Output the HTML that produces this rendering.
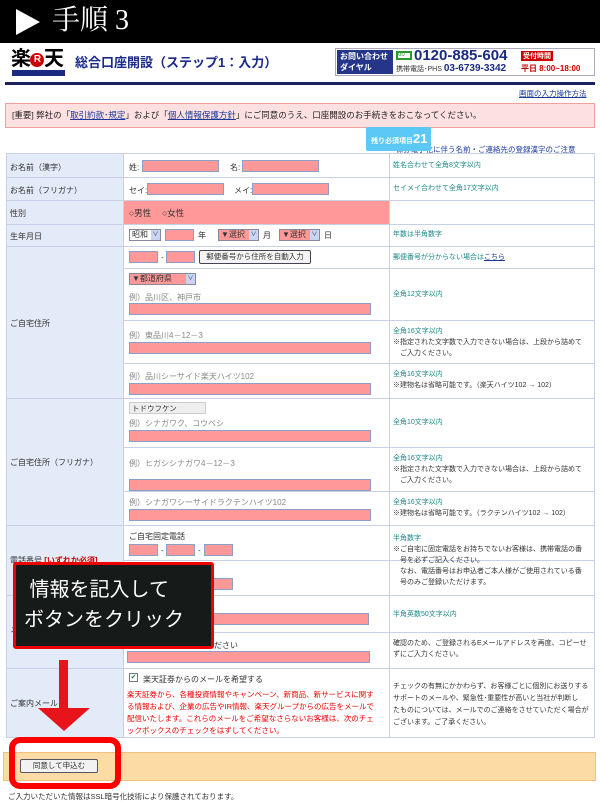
<!DOCTYPE html>
<html><head><meta charset="utf-8"><style>
*{margin:0;padding:0;box-sizing:border-box}
body{width:600px;height:800px;position:relative;background:#fff;font-family:"Liberation Sans","Noto Sans CJK JP",sans-serif;font-size:8px;color:#333;overflow:hidden}
.a{position:absolute}
.inp{position:absolute;background:#f99;border:1px solid #8aa0c8}
.lab{position:absolute;left:10px;font-size:8px;color:#333}
.ex{position:absolute;color:#888;font-size:8px}
.note{position:absolute;left:393px;font-size:7px;line-height:11px;color:#333;white-space:nowrap}
.note.tl,.tl{color:#1a8a8a}
.hl{position:absolute;left:6px;width:589px;height:1px;background:#c8d0e6}
.sl{position:absolute;left:123px;width:472px;height:1px;background:#c8d0e6}
.sel{position:absolute;height:12px;border:1px solid #889;background:#fff;font-size:8px;line-height:10px;padding-left:2px}
.sel i{position:absolute;right:0;top:0;width:9px;height:10px;background:#c8d4f0;font-style:normal;font-size:6px;text-align:center;color:#335}
</style></head><body>
<div class="a" style="left:0;top:0;width:600px;height:43px;background:#000"></div>
<div class="a" style="left:16px;top:9px;width:0;height:0;border-left:24px solid #fff;border-top:13px solid transparent;border-bottom:13px solid transparent"></div>
<div class="a" style="left:52px;top:4px;color:#fff;font-family:'Liberation Serif','Noto Serif CJK SC',serif;font-size:28px;line-height:34px">手順 3</div>

<div class="a" style="left:11px;top:48px;font-size:20px;font-weight:bold;line-height:22px;color:#000;letter-spacing:-1px">楽<span style="display:inline-block;width:14px;height:14px;border-radius:50%;background:#c00;color:#fff;font-size:10px;line-height:14px;text-align:center;vertical-align:3px">R</span>天</div>
<div class="a" style="left:12px;top:70px;width:53px;height:6px;background:#1a2a80"></div>
<div class="a" style="left:75px;top:52px;font-size:13px;color:#1a2a8a;font-weight:bold;white-space:nowrap">総合口座開設（ステップ1：入力）</div>
<div class="a" style="left:335px;top:48px;width:260px;height:28px;border:1px solid #aab;background:#fff"></div>
<div class="a" style="left:337px;top:50px;width:56px;height:24px;background:#24358a;color:#fff;font-size:8px;font-weight:bold;line-height:11px;padding:1px 3px">お問い合わせ<br>ダイヤル</div>
<div class="a" style="left:396px;top:51px;width:16px;height:9px;border:2px solid #2a9a2a;font-size:6px;color:#2a9a2a;line-height:5px">oo</div>
<div class="a" style="left:414px;top:47px;font-size:15px;font-weight:bold;color:#1a2a80">0120-885-604</div>
<div class="a" style="left:396px;top:63px;font-size:7px;color:#333">携帯電話･PHS <b style="font-size:10px;color:#1a2a80">03-6739-3342</b></div>
<div class="a" style="left:521px;top:51px;background:#c00;color:#fff;font-size:7px;font-weight:bold;padding:0 2px">受付時間</div>
<div class="a" style="left:521px;top:63px;color:#c00;font-size:8px;font-weight:bold">平日 8:00~18:00</div>
<div class="a" style="left:5px;top:82px;width:590px;height:3px;background:#1a2060"></div>
<div class="a" style="left:519px;top:88px;font-size:7.5px;color:#1a3a9a;text-decoration:underline">画面の入力操作方法</div>

<div class="a" style="left:5px;top:103px;width:590px;height:25px;background:#fde0e0;border:1px solid #f0a0a0;font-size:8.5px;line-height:23px;padding-left:6px;color:#222">[重要] 弊社の「<u style="color:#1a3a9a">取引約款･規定</u>」および「<u style="color:#1a3a9a">個人情報保護方針</u>」にご同意のうえ、口座開設のお手続きをおこなってください。</div>
<div class="a" style="left:388px;top:144px;font-size:7.5px;color:#1a3a9a;text-decoration:underline;white-space:nowrap">「株券電子化に伴う名前・ご連絡先の登録漢字のご注意</div>
<div class="a" style="left:366px;top:127px;width:65px;height:24px;background:#5cc8f5;border-radius:2px;color:#fff;font-weight:bold;font-size:7px;line-height:24px;padding-left:5px;white-space:nowrap">残り必須項目<span style="font-size:13px">21</span></div>

<div class="a" style="left:6px;top:153px;width:589px;height:585px;border:1px solid #c8d0e6"></div>
<div class="a" style="left:7px;top:154px;width:116px;height:583px;background:#e3eaf8"></div>
<div class="a" style="left:123px;top:153px;width:1px;height:585px;background:#c8d0e6"></div>
<div class="a" style="left:389px;top:153px;width:1px;height:585px;background:#c8d0e6"></div>
<div class="hl" style="top:177px"></div><div class="hl" style="top:200px"></div><div class="hl" style="top:224px"></div><div class="hl" style="top:246px"></div>
<div class="sl" style="top:268px"></div><div class="sl" style="top:320px"></div><div class="sl" style="top:363px"></div>
<div class="hl" style="top:398px"></div>
<div class="sl" style="top:447px"></div><div class="sl" style="top:491px"></div>
<div class="hl" style="top:525px"></div><div class="sl" style="top:560px"></div>
<div class="hl" style="top:595px"></div><div class="sl" style="top:632px"></div><div class="hl" style="top:668px"></div>

<div class="lab" style="top:162px">お名前（漢字）</div>
<div class="lab" style="top:185px">お名前（フリガナ）</div>
<div class="lab" style="top:208px">性別</div>
<div class="lab" style="top:231px">生年月日</div>
<div class="lab" style="top:318px">ご自宅住所</div>
<div class="lab" style="top:457px">ご自宅住所（フリガナ）</div>
<div class="lab" style="top:555px">電話番号 <b style="color:#c00;text-decoration:underline">[いずれか必須]</b></div>
<div class="lab" style="top:698px">ご案内メール</div>
<div class="lab" style="top:624px">メ</div>

<div class="a" style="left:129px;top:162px">姓:</div><div class="inp" style="left:142px;top:160px;width:77px;height:12px"></div>
<div class="a" style="left:230px;top:162px">名:</div><div class="inp" style="left:242px;top:160px;width:77px;height:12px"></div>
<div class="a" style="left:129px;top:185px">セイ:</div><div class="inp" style="left:147px;top:183px;width:77px;height:12px"></div>
<div class="a" style="left:234px;top:185px">メイ:</div><div class="inp" style="left:252px;top:183px;width:77px;height:12px"></div>
<div class="a" style="left:124px;top:201px;width:265px;height:23px;background:#f99"></div>
<div class="a" style="left:129px;top:207px;font-size:8.5px">○男性　 ○女性</div>
<div class="sel" style="left:129px;top:229px;width:32px">昭和<i>∨</i></div>
<div class="inp" style="left:165px;top:229px;width:29px;height:12px"></div><div class="a" style="left:198px;top:230px">年</div>
<div class="sel" style="left:218px;top:229px;width:41px;background:#f99">▼選択<i>∨</i></div><div class="a" style="left:263px;top:230px">月</div>
<div class="sel" style="left:279px;top:229px;width:41px;background:#f99">▼選択<i>∨</i></div><div class="a" style="left:324px;top:230px">日</div>

<div class="inp" style="left:129px;top:251px;width:29px;height:12px"></div><div class="a" style="left:161px;top:253px">-</div>
<div class="inp" style="left:166px;top:251px;width:29px;height:12px"></div>
<div class="a" style="left:199px;top:250px;width:112px;height:14px;border:1px solid #445;border-radius:2px;background:#f4f4f4;font-size:7.5px;text-align:center;line-height:12px">郵便番号から住所を自動入力</div>
<div class="sel" style="left:129px;top:273px;width:67px;background:#f99">▼都道府県<i>∨</i></div>
<div class="ex" style="left:129px;top:292px">例）品川区、神戸市</div>
<div class="inp" style="left:129px;top:303px;width:242px;height:12px"></div>
<div class="ex" style="left:129px;top:330px">例）東品川4－12－3</div>
<div class="inp" style="left:129px;top:342px;width:242px;height:12px"></div>
<div class="ex" style="left:129px;top:371px">例）品川シーサイド楽天ハイツ102</div>
<div class="inp" style="left:129px;top:383px;width:242px;height:12px"></div>

<div class="a" style="left:129px;top:402px;width:77px;height:12px;background:#eee;border:1px solid #ccc;font-size:7.5px;padding-left:2px">トドウフケン</div>
<div class="ex" style="left:129px;top:418px">例）シナガワク、コウベシ</div>
<div class="inp" style="left:129px;top:430px;width:242px;height:12px"></div>
<div class="ex" style="left:129px;top:458px">例）ヒガシシナガワ4－12－3</div>
<div class="inp" style="left:129px;top:479px;width:242px;height:12px"></div>
<div class="ex" style="left:129px;top:497px">例）シナガワシーサイドラクテンハイツ102</div>
<div class="inp" style="left:129px;top:509px;width:242px;height:12px"></div>

<div class="a" style="left:129px;top:531px">ご自宅固定電話</div>
<div class="inp" style="left:129px;top:544px;width:29px;height:12px"></div><div class="a" style="left:161px;top:546px">-</div>
<div class="inp" style="left:166px;top:544px;width:29px;height:12px"></div><div class="a" style="left:198px;top:546px">-</div>
<div class="inp" style="left:204px;top:544px;width:29px;height:12px"></div>
<div class="inp" style="left:204px;top:578px;width:29px;height:12px"></div>
<div class="inp" style="left:129px;top:613px;width:240px;height:12px"></div>
<div class="a" style="left:214px;top:640px">ださい</div>
<div class="inp" style="left:127px;top:651px;width:243px;height:12px"></div>

<div class="a" style="left:129px;top:673px;width:9px;height:9px;border:1px solid #778;font-size:7px;line-height:7px;color:#283;text-align:center">✔</div>
<div class="a" style="left:143px;top:674px">楽天証券からのメールを希望する</div>
<div class="a" style="left:127px;top:689px;width:252px;color:#e00;font-size:7.5px;line-height:12px">楽天証券から、各種投資情報やキャンペーン、新商品、新サービスに関する情報および、企業の広告やIR情報、楽天グループからの広告をメールで配信いたします。これらのメールをご希望なさらないお客様は、次のチェックボックスのチェックをはずしてください。</div>

<div class="note tl" style="top:160px">姓名合わせて全角8文字以内</div>
<div class="note tl" style="top:183px">セイメイ合わせて全角17文字以内</div>
<div class="note tl" style="top:229px">年数は半角数字</div>
<div class="note" style="top:252px"><span class="tl">郵便番号が分からない場合は</span><u style="color:#1a3a9a">こちら</u></div>
<div class="note tl" style="top:289px">全角12文字以内</div>
<div class="note" style="top:326px"><span class="tl">全角16文字以内</span><br>※指定された文字数で入力できない場合は、上段から詰めて<br>　ご入力ください。</div>
<div class="note" style="top:369px"><span class="tl">全角16文字以内</span><br>※建物名は省略可能です。（楽天ハイツ102 → 102）</div>
<div class="note tl" style="top:417px">全角10文字以内</div>
<div class="note" style="top:453px"><span class="tl">全角16文字以内</span><br>※指定された文字数で入力できない場合は、上段から詰めて<br>　ご入力ください。</div>
<div class="note" style="top:497px"><span class="tl">全角16文字以内</span><br>※建物名は省略可能です。（ラクテンハイツ102 → 102）</div>
<div class="note" style="top:533px"><span class="tl">半角数字</span><br>※ご自宅に固定電話をお持ちでないお客様は、携帯電話の番<br>　号を必ずご記入ください。<br>　なお、電話番号はお申込者ご本人様がご使用されている番<br>　号のみご登録いただけます。</div>
<div class="note tl" style="top:609px">半角英数50文字以内</div>
<div class="note" style="top:638px">確認のため、ご登録されるEメールアドレスを再度、コピーせ<br>ずにご入力ください。</div>
<div class="note" style="top:681px;line-height:12px">チェックの有無にかかわらず、お客様ごとに個別にお送りする<br>サポートのメールや、緊急性･重要性が高いと当社が判断し<br>たものについては、メールでのご連絡をさせていただく場合が<br>ございます。ご了承ください。</div>

<div class="a" style="left:3px;top:752px;width:593px;height:29px;background:#fcdca4;border:1px solid #f0c080"></div>
<div class="a" style="left:20px;top:759px;width:78px;height:14px;border:1px solid #556;border-radius:2px;background:#f2f2f2;font-size:7.5px;text-align:center;line-height:12px">同意して申込む</div>
<div class="a" style="left:8px;top:791px;font-size:7.5px">ご入力いただいた情報はSSL暗号化技術により保護されております。</div>

<div class="a" style="left:13px;top:562px;width:201px;height:87px;background:#161a18;border:3px solid #e00;border-radius:3px;color:#fff;font-size:20px;line-height:30px;padding:10px 0 0 8px;white-space:nowrap">&nbsp;情報を記入して<br>ボタンをクリック</div>
<div class="a" style="left:59px;top:660px;width:9px;height:56px;background:#e8141c"></div>
<div class="a" style="left:38px;top:708px;width:0;height:0;border-left:26px solid transparent;border-right:26px solid transparent;border-top:23px solid #e8141c"></div>
<div class="a" style="left:9px;top:737px;width:112px;height:52px;border:6px solid #f00;border-radius:11px"></div>
</body></html>
